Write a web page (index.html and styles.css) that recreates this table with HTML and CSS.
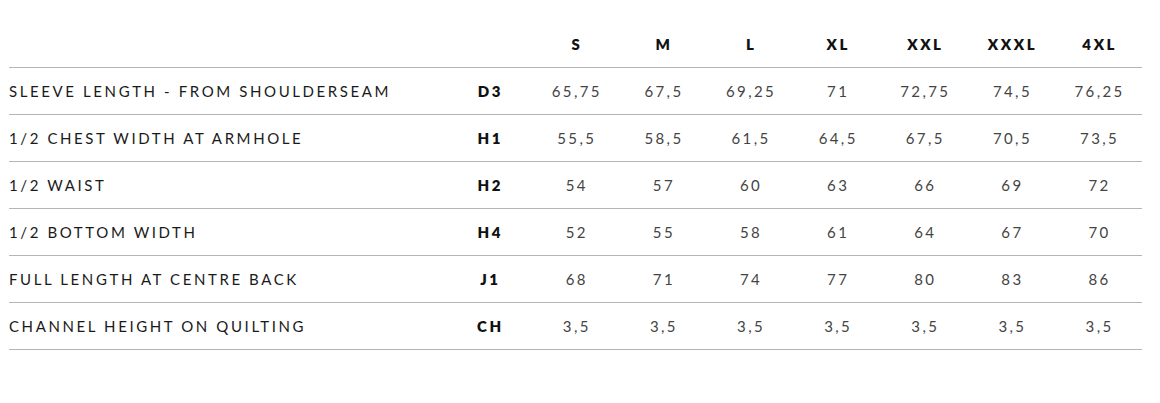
FILE: index.html
```html
<!DOCTYPE html>
<html>
<head>
<meta charset="utf-8">
<link rel="stylesheet" href="styles.css">
</head>
<body>
<table class="size-table">
  <colgroup>
    <col class="c-label"><col class="c-code">
    <col class="c-size"><col class="c-size"><col class="c-size"><col class="c-size"><col class="c-size"><col class="c-size"><col class="c-size">
  </colgroup>
  <thead>
    <tr><th></th><th></th><th>S</th><th>M</th><th>L</th><th>XL</th><th>XXL</th><th>XXXL</th><th>4XL</th></tr>
  </thead>
  <tbody>
    <tr><td class="label">SLEEVE LENGTH - FROM SHOULDERSEAM</td><td class="code">D3</td><td>65,75</td><td>67,5</td><td>69,25</td><td>71</td><td>72,75</td><td>74,5</td><td>76,25</td></tr>
    <tr><td class="label">1/2 CHEST WIDTH AT ARMHOLE</td><td class="code">H1</td><td>55,5</td><td>58,5</td><td>61,5</td><td>64,5</td><td>67,5</td><td>70,5</td><td>73,5</td></tr>
    <tr><td class="label">1/2 WAIST</td><td class="code">H2</td><td>54</td><td>57</td><td>60</td><td>63</td><td>66</td><td>69</td><td>72</td></tr>
    <tr><td class="label">1/2 BOTTOM WIDTH</td><td class="code">H4</td><td>52</td><td>55</td><td>58</td><td>61</td><td>64</td><td>67</td><td>70</td></tr>
    <tr><td class="label">FULL LENGTH AT CENTRE BACK</td><td class="code">J1</td><td>68</td><td>71</td><td>74</td><td>77</td><td>80</td><td>83</td><td>86</td></tr>
    <tr><td class="label">CHANNEL HEIGHT ON QUILTING</td><td class="code">CH</td><td>3,5</td><td>3,5</td><td>3,5</td><td>3,5</td><td>3,5</td><td>3,5</td><td>3,5</td></tr>
  </tbody>
</table>
</body>
</html>
```

FILE: styles.css
```css
html, body {
  margin: 0;
  padding: 0;
  background: #fff;
}
body {
  padding: 21px 0 0 9px;
  font-family: Lato, "Liberation Sans", sans-serif;
}
.size-table {
  border-collapse: collapse;
  table-layout: fixed;
  width: 1133px;
}
.c-label { width: 437px; }
.c-code { width: 86px; }
.c-size { width: 87.14px; }
.size-table th,
.size-table td {
  padding: 0;
  text-align: center;
  vertical-align: middle;
}
.size-table th {
  height: 46px;
  font-size: 15px;
  font-weight: 800;
  letter-spacing: 2.6px;
  text-indent: 2.6px;
  color: #111;
  border-bottom: 1px solid #b5b5b5;
}
.size-table td {
  height: 46px;
  font-size: 15px;
  letter-spacing: 2.4px;
  text-indent: 2.4px;
  color: #444;
  border-bottom: 1px solid #b5b5b5;
}
.size-table td.label {
  text-align: left;
  text-indent: 0;
  color: #1a1a1a;
  letter-spacing: 2.6px;
}
.size-table td.code {
  font-weight: 800;
  color: #111;
  letter-spacing: 2.6px;
  text-indent: 2.6px;
}
```
